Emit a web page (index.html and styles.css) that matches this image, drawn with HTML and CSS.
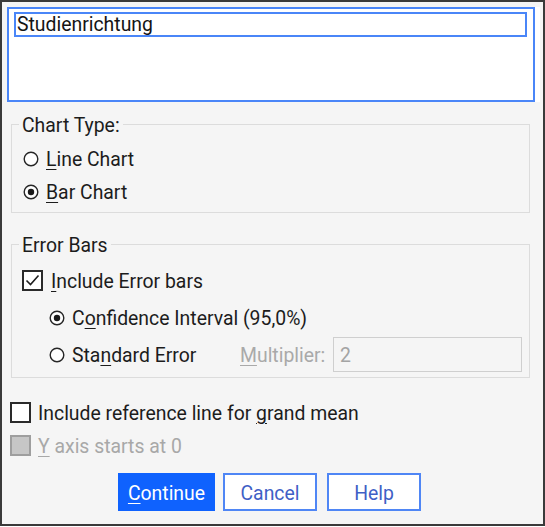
FILE: index.html
```html
<!DOCTYPE html>
<html>
<head>
<meta charset="utf-8">
<link rel="stylesheet" href="styles.css">
</head>
<body>
<div class="dialog">
  <div class="listwrap">
    <div class="listbox">
      <div class="item">Studienrichtung</div>
    </div>
  </div>

  <fieldset class="group chart">
    <legend><span>Chart Type:</span></legend>
    <div class="row r33 ctl-first">
      <svg class="radio" viewBox="0 0 16 16"><circle cx="8" cy="8" r="6.8" fill="#fff" stroke="#262626" stroke-width="1.4"/></svg>
      <span><u>L</u>ine Chart</span>
    </div>
    <div class="row r33 ctl-first">
      <svg class="radio" viewBox="0 0 16 16"><circle cx="8" cy="8" r="6.8" fill="#fff" stroke="#262626" stroke-width="1.4"/><circle cx="8" cy="8" r="3.2" fill="#1a1a1a"/></svg>
      <span><u>B</u>ar Chart</span>
    </div>
  </fieldset>

  <fieldset class="group errors">
    <legend><span>Error Bars</span></legend>
    <div class="row r37 ctl-first">
      <span class="check">
        <svg viewBox="0 0 17 17"><path d="M2.5 8.5 L6.5 12.5 L14.5 3.5" fill="none" stroke="#1e1e1e" stroke-width="1.6"/></svg>
      </span>
      <span class="cklabel"><u>I</u>nclude Error bars</span>
    </div>
    <div class="row r37 indent">
      <svg class="radio" viewBox="0 0 16 16"><circle cx="8" cy="8" r="6.8" fill="#fff" stroke="#262626" stroke-width="1.4"/><circle cx="8" cy="8" r="3.2" fill="#1a1a1a"/></svg>
      <span>C<u>o</u>nfidence Interval (95,0%)</span>
    </div>
    <div class="row r37 indent">
      <svg class="radio" viewBox="0 0 16 16"><circle cx="8" cy="8" r="6.8" fill="#fff" stroke="#262626" stroke-width="1.4"/></svg>
      <span class="se">Sta<u>n</u>dard Error</span>
      <span class="mult"><u>M</u>ultiplier:</span>
      <span class="input">2</span>
    </div>
  </fieldset>

  <div class="row r33 outer first-outer">
    <span class="check"></span>
    <span class="cklabel2">Include reference line for <u>g</u>rand mean</span>
  </div>
  <div class="row r33 outer disabled">
    <span class="check off"></span>
    <span class="cklabel2"><u>Y</u> axis starts at 0</span>
  </div>

  <div class="buttons">
    <button class="btn primary"><u>C</u>ontinue</button>
    <button class="btn">Cancel</button>
    <button class="btn">Help</button>
  </div>
</div>
</body>
</html>
```

FILE: styles.css
```css
html, body {
  margin: 0;
  padding: 0;
  background: #ffffff;
}

.dialog {
  width: 545px;
  height: 526px;
  box-sizing: border-box;
  border: 2px solid #3a3a3a;
  background: #f5f5f5;
  padding: 5px 0 0 5px;
  font-family: Roboto, "Liberation Sans", sans-serif;
  font-size: 19.4px;
  color: #1c1c1c;
  display: flex;
  flex-direction: column;
  align-items: flex-start;
}

u {
  text-decoration: underline;
  text-underline-offset: 3px;
  text-decoration-thickness: 1px;
}

.listwrap {
  width: 533px;
  background: #ffffff;
}

.listbox {
  width: 528px;
  height: 95px;
  box-sizing: border-box;
  border: 2px solid #4a86f8;
  background: #ffffff;
  padding: 3px 0 0 5px;
}

.item {
  width: 513px;
  height: 25px;
  box-sizing: border-box;
  border: 2px solid #4a86f8;
  line-height: 22px;
  padding-left: 1px;
  color: #141414;
}

.group {
  width: 519px;
  box-sizing: border-box;
  margin: 12px 0 0 4px;
  border: 1px solid #dcdcdc;
  padding: 8px 0 4px 7px;
  min-width: 0;
}

.group.errors {
  margin-top: 21px;
}

.group legend {
  padding: 0 3px;
  line-height: 0;
  color: #1c1c1c;
}

.group legend span {
  display: inline-block;
  line-height: 17px;
  padding-top: 3px;
}

.row {
  display: flex;
  align-items: center;
  line-height: 22px;
}

.row > span {
  padding-top: 2px;
}

.row > .check,
.row > .input {
  padding-top: 0;
}

.r33 { height: 33px; }
.r37 { height: 37px; }

.ctl-first { padding-left: 4px; }
.indent { padding-left: 30px; }

.radio {
  width: 16px;
  height: 16px;
  margin-right: 7px;
  flex: none;
}

.ctl-first > .check {
  margin-left: -1px;
}

.check {
  width: 21px;
  height: 21px;
  box-sizing: border-box;
  border: 2px solid #2a2a2a;
  background: #ffffff;
  margin-right: 8px;
  flex: none;
  display: flex;
  align-items: center;
  justify-content: center;
}

.check svg {
  width: 17px;
  height: 17px;
}

.check.off {
  background: #c6c6c6;
  border-color: #9e9e9e;
}

.se {
  width: 168px;
}

.mult {
  color: #a9a9a9;
  width: 93px;
}

.input {
  width: 189px;
  height: 35px;
  box-sizing: border-box;
  border: 1px solid #cfcfcf;
  background: #f5f5f5;
  color: #a4a4a4;
  line-height: 35px;
  padding-left: 6px;
}

.outer {
  padding-left: 3px;
}

.cklabel2 {
  margin-left: -1px;
}

.first-outer {
  margin-top: 18px;
}

.disabled {
  color: #a8a8a8;
}

.buttons {
  align-self: stretch;
  display: flex;
  justify-content: flex-start;
  padding-left: 111px;
  margin-top: 11px;
  gap: 8px;
}

.btn {
  font-family: Roboto, "Liberation Sans", sans-serif;
  font-size: 19.4px;
  height: 38px;
  width: 94px;
  background: #ffffff;
  border: 2px solid #4f86f5;
  color: #3f5fc6;
  padding: 2px 0 0 0;
  margin: 0;
  border-radius: 0;
}

.btn + .btn + .btn {
  margin-left: 2px;
}

.btn.primary {
  width: 97px;
  background: #0f62fe;
  border-color: #0f62fe;
  color: #ffffff;
}
```
